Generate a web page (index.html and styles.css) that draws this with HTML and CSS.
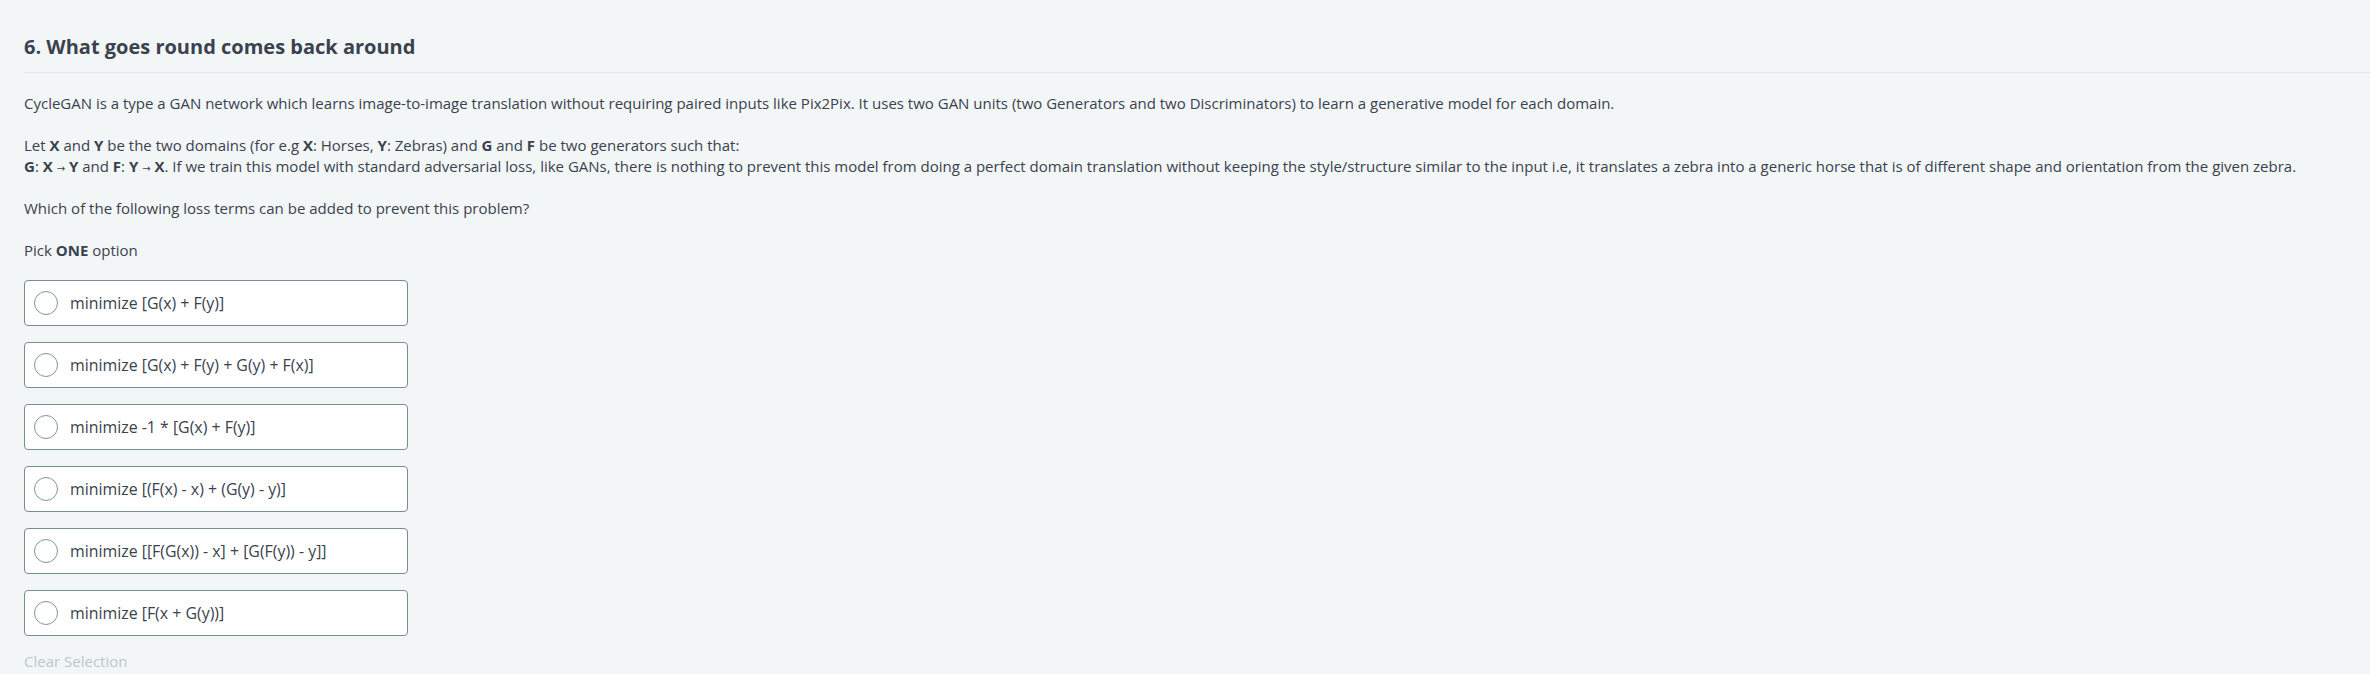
FILE: index.html
```html
<!DOCTYPE html>
<html>
<head>
<meta charset="utf-8">
<link rel="stylesheet" href="styles.css">
</head>
<body>
<div class="question">
  <h2 class="title">6. What goes round comes back around</h2>
  <div class="statement">
    <p>CycleGAN is a type a GAN network which learns image-to-image translation without requiring paired inputs like Pix2Pix. It uses two GAN units (two Generators and two Discriminators) to learn a generative model for each domain.</p>
    <p>Let <b>X</b> and <b>Y</b> be the two domains (for e.g <b>X</b>: Horses, <b>Y</b>: Zebras) and <b>G</b> and <b>F</b> be two generators such that:<br><b>G</b>: <b>X</b> <span class="arrow">→</span> <b>Y</b> and <b>F</b>: <b>Y</b> <span class="arrow">→</span> <b>X</b>. If we train this model with standard adversarial loss, like GANs, there is nothing to prevent this model from doing a perfect domain translation without keeping the style/structure similar to the input i.e, it translates a zebra into a generic horse that is of different shape and orientation from the given zebra.</p>
    <p>Which of the following loss terms can be added to prevent this problem?</p>
    <p>Pick <b>ONE</b> option</p>
  </div>
  <div class="options">
    <label class="option"><span class="radio"></span><span class="opt-text">minimize [G(x) + F(y)]</span></label>
    <label class="option"><span class="radio"></span><span class="opt-text">minimize [G(x) + F(y) + G(y) + F(x)]</span></label>
    <label class="option"><span class="radio"></span><span class="opt-text">minimize -1 * [G(x) + F(y)]</span></label>
    <label class="option"><span class="radio"></span><span class="opt-text">minimize [(F(x) - x) + (G(y) - y)]</span></label>
    <label class="option"><span class="radio"></span><span class="opt-text">minimize [[F(G(x)) - x] + [G(F(y)) - y]]</span></label>
    <label class="option"><span class="radio"></span><span class="opt-text">minimize [F(x + G(y))]</span></label>
  </div>
  <div class="clear">Clear Selection</div>
</div>
</body>
</html>
```
FILE: styles.css
```css
html, body {
  margin: 0;
  padding: 0;
  background: #f3f6f7;
}
body {
  font-family: "Open Sans", "DejaVu Sans", sans-serif;
  color: #39424e;
}
.question {
  padding: 33px 0 0 24px;
}
.title {
  margin: 0;
  font-size: 20px;
  line-height: 28px;
  font-weight: 700;
  padding-bottom: 11px;
  border-bottom: 1px solid #e2e8ea;
}
.statement {
  padding-top: 20px;
  font-size: 15px;
  line-height: 21px;
}
.statement p {
  margin: 0 0 21px 0;
}
.statement p:last-child {
  margin-bottom: 0;
}
.statement b {
  font-weight: 700;
}
.arrow {
  font-size: 10px;
  line-height: 1;
}
.options {
  display: flex;
  flex-direction: column;
  gap: 16px;
  margin-top: 19px;
  width: 384px;
}
.option {
  box-sizing: border-box;
  height: 46px;
  display: flex;
  align-items: center;
  background: #ffffff;
  border: 1px solid #738f93;
  border-radius: 4px;
  padding-left: 9px;
}
.radio {
  box-sizing: border-box;
  width: 24px;
  height: 24px;
  border: 1px solid #7f969b;
  border-radius: 50%;
  background: #fff;
  flex: none;
}
.opt-text {
  margin-left: 12px;
  font-size: 15.9px;
  color: #39424e;
}
.clear {
  margin-top: 15px;
  font-size: 15px;
  line-height: 21px;
  color: #b9c8cb;
}
```
